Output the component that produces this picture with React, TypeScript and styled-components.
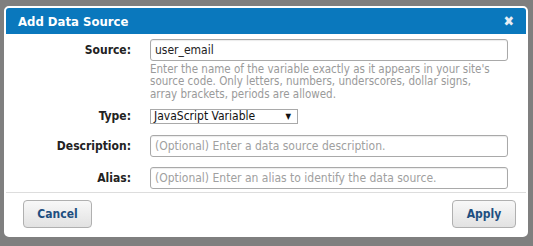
import React from "react";
import styled, { createGlobalStyle } from "styled-components";

const FONT = `"DejaVu Sans Condensed", "Liberation Sans", sans-serif`;

const GlobalStyle = createGlobalStyle`
  html, body {
    margin: 0;
    padding: 0;
    background: #7f7f7f;
    width: 533px;
    height: 246px;
    overflow: hidden;
  }
`;

const Page = styled.div`
  padding: 6px 5px 0 4px;
  font-family: ${FONT};
`;

const Dialog = styled.div`
  width: 524px;
  height: 231px;
  background: #ffffff;
  border: 2px solid #ffffff;
  border-radius: 5px;
  box-sizing: border-box;
  display: flex;
  flex-direction: column;
`;

const Header = styled.div`
  height: 26px;
  background: #0a78bd;
  border-radius: 3px 3px 0 0;
  display: flex;
  align-items: center;
  justify-content: space-between;
  padding: 0 12px 0 12px;
`;

const Title = styled.span`
  color: #ffffff;
  font-weight: bold;
  font-size: 13px;
`;

const Close = styled.span`
  color: #e8eef4;
  font-weight: bold;
  font-size: 14px;
  line-height: 1;
`;

const Body = styled.div`
  padding: 5px 0 0 0;
  display: flex;
  flex-direction: column;
  border-bottom: 1px solid #dddddd;
  height: 159px;
  box-sizing: border-box;
`;

const Row = styled.div<{ $top?: boolean; $mt?: number }>`
  display: grid;
  grid-template-columns: 125px 358px;
  column-gap: 19px;
  margin-top: ${({ $mt }) => $mt ?? 0}px;
  align-items: ${({ $top }) => ($top ? "start" : "center")};
`;

const Label = styled.label<{ $pad?: number }>`
  text-align: right;
  font-weight: bold;
  font-size: 12px;
  color: #222;
  padding-top: ${({ $pad }) => $pad ?? 0}px;
`;

const Input = styled.div<{ $placeholder?: boolean }>`
  height: 22px;
  box-sizing: border-box;
  border: 1px solid #a9a9a9;
  border-radius: 3px;
  padding: 0 4px;
  display: flex;
  align-items: center;
  font-size: 12px;
  color: ${({ $placeholder }) => ($placeholder ? "#a0a0a0" : "#222")};
  box-shadow: inset 0 1px 1px rgba(0, 0, 0, 0.08);
`;

const Help = styled.div`
  margin-top: 2px;
  max-width: 350px;
  font-size: 11.5px;
  line-height: 12.3px;
  color: #9a9a9a;
`;

const Select = styled.div`
  width: 148px;
  height: 15px;
  box-sizing: border-box;
  border: 1px solid #a9a9a9;
  display: flex;
  align-items: center;
  justify-content: space-between;
  padding: 0 6px 0 3px;
  font-size: 12px;
  color: #111;
`;

const Arrow = styled.span`
  font-size: 8px;
  color: #111;
`;

const Footer = styled.div`
  flex: 1;
  display: flex;
  justify-content: space-between;
  align-items: flex-start;
  padding: 7px 10px 0 17px;
`;

const Button = styled.button<{ $w: number }>`
  width: ${({ $w }) => $w}px;
  height: 28px;
  padding: 0;
  border: 1px solid #b0b0b0;
  border-radius: 4px;
  background: linear-gradient(#f8f8f8, #e2e2e2);
  font-family: ${FONT};
  font-weight: bold;
  font-size: 12px;
  color: #1e4f80;
`;

export default function App() {
  return (
    <>
      <GlobalStyle />
      <Page>
        <Dialog>
          <Header>
            <Title>Add Data Source</Title>
            <Close>✖</Close>
          </Header>
          <Body>
            <Row $top>
              <Label $pad={4}>Source:</Label>
              <div>
                <Input>user_email</Input>
                <Help>
                  Enter the name of the variable exactly as it appears in your
                  site's source code. Only letters, numbers, underscores, dollar
                  signs, array brackets, periods are allowed.
                </Help>
              </div>
            </Row>
            <Row $mt={9}>
              <Label>Type:</Label>
              <div>
                <Select>
                  JavaScript Variable
                  <Arrow>▼</Arrow>
                </Select>
              </div>
            </Row>
            <Row $mt={11}>
              <Label>Description:</Label>
              <Input $placeholder>(Optional) Enter a data source description.</Input>
            </Row>
            <Row $mt={10}>
              <Label>Alias:</Label>
              <Input $placeholder>
                (Optional) Enter an alias to identify the data source.
              </Input>
            </Row>
          </Body>
          <Footer>
            <Button $w={69}>Cancel</Button>
            <Button $w={64}>Apply</Button>
          </Footer>
        </Dialog>
      </Page>
    </>
  );
}
